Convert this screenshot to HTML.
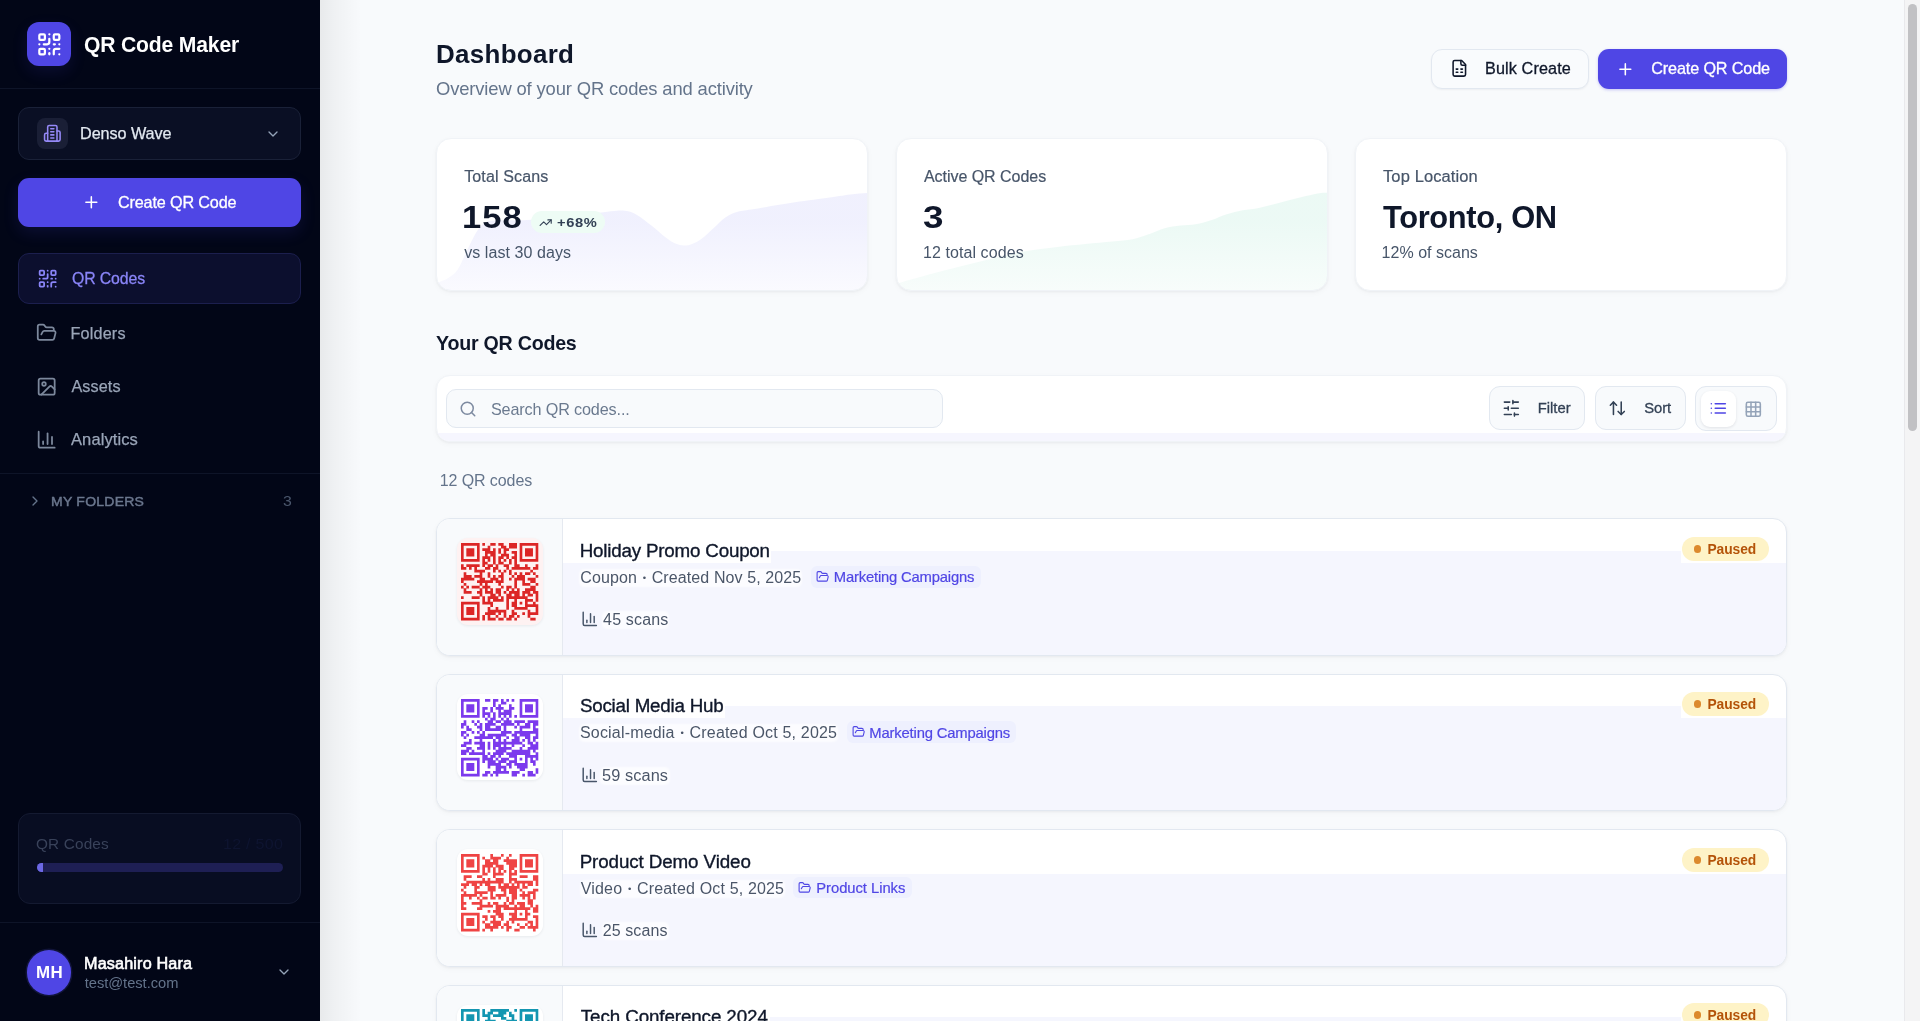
<!DOCTYPE html>
<html lang="en">
<head>
<meta charset="utf-8">
<title>QR Code Maker - Dashboard</title>
<style>
*{box-sizing:border-box;margin:0;padding:0}
html,body{width:1920px;height:1021px;overflow:hidden;background:#f8fafc;font-family:"Liberation Sans",sans-serif;color:#0f172a}
.abs{position:absolute}
.t{position:absolute;white-space:nowrap;line-height:1}
svg{position:absolute;overflow:visible}
svg.ic{fill:none;stroke:currentColor;stroke-linecap:round;stroke-linejoin:round}
#sb{position:absolute;left:0;top:0;width:320px;height:1021px;background:#020617;overflow:hidden}
#sbshadow{position:absolute;left:320px;top:0;width:42px;height:1021px;background:linear-gradient(90deg,rgba(0,0,0,.066) 0,rgba(0,0,0,.041) 31%,rgba(0,0,0,.028) 50%,rgba(0,0,0,.015) 70%,rgba(0,0,0,0) 100%)}
.sep{position:absolute;left:0;width:320px;height:1px;background:#0e1428}
#main{position:absolute;left:0;top:0;width:1920px;height:1021px;overflow:hidden}
.lay{position:absolute;left:0;top:0;width:100%;height:100%;will-change:transform}
.card{position:absolute;background:#fff;border:1px solid #f0f3f7;border-radius:15px;box-shadow:0 1px 3px rgba(15,23,42,.05),0 2px 6px rgba(15,23,42,.03);overflow:hidden}
</style>
</head>
<body>

<div id="sbshadow"></div>
<div id="main">
<div class="lay">
<div class="t" style="left:435.66px;top:42px;font-size:25px;font-weight:700;color:#0f172a;letter-spacing:0.305px;transform:scaleX(1.0370);transform-origin:0 0;">Dashboard</div>
<div class="t" style="left:435.74px;top:79px;font-size:19px;font-weight:400;color:#64748b;letter-spacing:-0.154px;transform:scaleX(0.9690);transform-origin:0 0;">Overview of your QR codes and activity</div>
<div class="abs" style="left:1431px;top:48.7px;width:158.00px;height:40.00px;background:#f9fbfd;border:1px solid #e2e8f0;border-radius:11px;box-shadow:0 1px 2px rgba(15,23,42,.05)"></div>
<svg class="ic" viewBox="0 0 24 24" width="18.67" height="18.67" style="left:1449.66px;top:59.46px;color:#0f172a;stroke-width:2;"><path d="M15 2H6a2 2 0 0 0-2 2v16a2 2 0 0 0 2 2h12a2 2 0 0 0 2-2V7Z"/><path d="M14 2v4a2 2 0 0 0 2 2h4"/><path d="M8 13h2"/><path d="M14 13h2"/><path d="M8 17h2"/><path d="M14 17h2"/></svg>
<div class="t" style="left:1485.05px;top:60px;font-size:16.2px;font-weight:400;color:#0f172a;letter-spacing:0.112px;-webkit-text-stroke:0.3px #0f172a;">Bulk Create</div>
<div class="abs" style="left:1598px;top:48.7px;width:189.30px;height:40.10px;background:#4f46e5;border-radius:11px;box-shadow:0 1px 3px rgba(79,70,229,.3)"></div>
<svg class="ic" viewBox="0 0 24 24" width="18.67" height="18.67" style="left:1615.76px;top:59.66px;color:#fff;stroke-width:2;"><path d="M5 12h14"/><path d="M12 5v14"/></svg>
<div class="t" style="left:1651.31px;top:60px;font-size:16.2px;font-weight:400;color:#fff;letter-spacing:-0.142px;-webkit-text-stroke:0.3px #fff;">Create QR Code</div>
<div class="card" style="left:436px;top:138px;width:432.29999999999995px;height:153.3px"><svg width="432.29999999999995" height="153.3" viewBox="0 0 432.29999999999995 153.3" style="left:0;top:0"><linearGradient id="g1" x1="0" y1="0" x2="0" y2="1"><stop offset="0.3" stop-color="#6366f1" stop-opacity="0.095"/><stop offset="1" stop-color="#6366f1" stop-opacity="0.03"/></linearGradient><path d="M0,144 C0.2,143.9 -0.6,144.2 1.2,143.4 C3.0,142.6 7.6,141.4 10.8,139.3 C14.0,137.2 17.2,135.6 20.4,131 C23.6,126.4 26.9,117.8 29.9,111.8 C32.9,105.8 35.7,99.4 38.3,95 C40.9,90.6 42.9,87.6 45.5,85.4 C48.1,83.2 49.8,82.5 53.9,81.8 C58.0,81.1 64.0,81.3 70,81.2 C76.0,81.1 78.5,81.8 89.8,81.1 C101.1,80.4 123.7,78.5 137.7,77 C151.7,75.5 165.3,73.2 173.7,72.3 C182.1,71.4 183.6,71.2 188,71.8 C192.4,72.4 195.6,73.4 200,75.9 C204.4,78.4 209.6,82.8 214.4,86.6 C219.2,90.4 224.8,95.6 228.8,98.6 C232.8,101.6 235.4,103.3 238.4,104.6 C241.4,105.9 244.0,106.4 246.8,106.5 C249.6,106.6 252.1,106.1 255.1,105 C258.1,103.9 261.1,102.5 264.7,99.8 C268.3,97.1 272.7,92.6 276.7,89 C280.7,85.4 284.7,80.9 288.7,78.2 C292.7,75.5 295.9,74.1 300.7,72.7 C305.5,71.3 308.6,71.4 317.4,69.9 C326.2,68.4 341.4,65.7 353.4,63.9 C365.4,62.1 379.3,60.4 389.3,59 C399.3,57.6 406.1,56.4 413.3,55.5 C420.5,54.6 429.1,54.1 432.3,53.8 L432.29999999999995,153.3 L0,153.3 Z" fill="url(#g1)"/></svg></div>
<div class="card" style="left:895.5px;top:138px;width:432.0px;height:153.3px"><svg width="432.0" height="153.3" viewBox="0 0 432.0 153.3" style="left:0;top:0"><linearGradient id="g2" x1="0" y1="0" x2="0" y2="1"><stop offset="0.3" stop-color="#10b981" stop-opacity="0.08"/><stop offset="1" stop-color="#10b981" stop-opacity="0.03"/></linearGradient><path d="M0.0,146.5 C0.3,146.1 -2.2,145.5 2.0,144 C6.2,142.5 17.6,139.6 25.1,137.5 C32.6,135.4 37.1,134.2 47.1,131.6 C57.1,129.0 72.2,125.1 85.2,122 C98.2,118.9 112.8,115.1 125.3,112.8 C137.8,110.5 149.9,109.3 160.4,108 C170.9,106.7 179.2,105.9 188.4,105 C197.6,104.1 207.7,103.3 215.5,102.5 C223.3,101.7 229.3,101.5 235.5,100.2 C241.7,99.0 247.2,96.8 252.6,95 C257.9,93.2 262.4,90.7 267.6,89.3 C272.8,87.9 278.5,87.3 283.7,86.6 C288.9,85.9 293.5,86.1 298.7,85.2 C303.9,84.3 309.5,82.7 314.7,81 C319.9,79.3 324.6,76.8 329.8,75.2 C335.0,73.6 340.5,72.3 345.8,71.3 C351.1,70.2 356.5,70.0 361.8,68.9 C367.1,67.9 372.7,66.3 377.9,65 C383.1,63.7 387.7,62.3 392.9,61 C398.1,59.7 403.7,58.2 408.9,57 C414.1,55.8 420.1,54.4 424.0,53.9 C427.9,53.4 430.7,53.9 432.0,53.9 L432.0,153.3 L0,153.3 Z" fill="url(#g2)"/></svg></div>
<div class="card" style="left:1354.6px;top:138px;width:432.0px;height:153.3px"></div>
<div class="t" style="left:464.17px;top:169px;font-size:16px;font-weight:400;color:#475569;letter-spacing:0.147px;-webkit-text-stroke:0.2px #475569;">Total Scans</div>
<div class="t" style="left:461.89px;top:201px;font-size:32px;font-weight:700;color:#0f172a;letter-spacing:0.982px;transform:scaleX(1.0783);transform-origin:0 0;">158</div>
<div class="abs" style="left:530.5px;top:211.2px;width:74.80px;height:22.10px;background:#eefcf5;border-radius:11px"></div>
<svg class="ic" viewBox="0 0 24 24" width="13.33" height="13.33" style="left:539.04px;top:215.53px;color:#334155;stroke-width:2;"><polyline points="22 7 13.5 15.5 8.5 10.5 2 17"/><polyline points="16 7 22 7 22 13"/></svg>
<div class="t" style="left:556.85px;top:216px;font-size:13.4px;font-weight:700;color:#334155;letter-spacing:0.536px;transform:scaleX(1.0971);transform-origin:0 0;">+68%</div>
<div class="t" style="left:464.18px;top:245px;font-size:16px;font-weight:400;color:#475569;letter-spacing:0.075px;">vs last 30 days</div>
<div class="t" style="left:923.96px;top:169px;font-size:16px;font-weight:400;color:#475569;letter-spacing:-0.038px;-webkit-text-stroke:0.2px #475569;">Active QR Codes</div>
<div class="t" style="left:923.25px;top:201px;font-size:32px;font-weight:700;color:#0f172a;letter-spacing:0.000px;transform:scaleX(1.1500);transform-origin:0 0;">3</div>
<div class="t" style="left:922.91px;top:245px;font-size:16px;font-weight:400;color:#475569;letter-spacing:0.086px;">12 total codes</div>
<div class="t" style="left:1382.56px;top:169px;font-size:16px;font-weight:400;color:#475569;letter-spacing:0.124px;transform:scaleX(1.0291);transform-origin:0 0;-webkit-text-stroke:0.2px #475569;">Top Location</div>
<div class="t" style="left:1382.51px;top:201px;font-size:32px;font-weight:700;color:#0f172a;letter-spacing:-0.367px;transform:scaleX(0.9639);transform-origin:0 0;">Toronto, ON</div>
<div class="t" style="left:1381.61px;top:245px;font-size:16px;font-weight:400;color:#475569;letter-spacing:0.019px;">12% of scans</div>
<div class="t" style="left:436.37px;top:333px;font-size:20.4px;font-weight:700;color:#0f172a;letter-spacing:-0.253px;transform:scaleX(0.9632);transform-origin:0 0;">Your QR Codes</div>
<div class="card" style="left:436px;top:375.2px;width:1350.6px;height:66.6px;border-radius:14px"><div class="abs" style="left:0;right:0;top:56.6px;bottom:0;background:#f6f6fe"></div></div>
<div class="abs" style="left:446.2px;top:389.3px;width:497.30px;height:38.90px;background:#f8fafc;border:1px solid #e2e8f0;border-radius:10px"></div>
<svg class="ic" viewBox="0 0 24 24" width="18" height="18" style="left:459.40px;top:399.90px;color:#7d8aa0;stroke-width:2;"><circle cx="11" cy="11" r="8"/><path d="m21 21-4.3-4.3"/></svg>
<div class="t" style="left:490.88px;top:401px;font-size:16.2px;font-weight:400;color:#6b7a8f;letter-spacing:-0.140px;">Search QR codes...</div>
<div class="abs" style="left:1488.6px;top:385.8px;width:96.90px;height:44.20px;background:#f8fafc;border:1px solid #e2e8f0;border-radius:11px"></div>
<svg class="ic" viewBox="0 0 24 24" width="18.67" height="18.67" style="left:1502.26px;top:398.67px;color:#334155;stroke-width:2;"><line x1="21" x2="14" y1="4" y2="4"/><line x1="10" x2="3" y1="4" y2="4"/><line x1="21" x2="12" y1="12" y2="12"/><line x1="8" x2="3" y1="12" y2="12"/><line x1="21" x2="16" y1="20" y2="20"/><line x1="12" x2="3" y1="20" y2="20"/><line x1="14" x2="14" y1="2" y2="6"/><line x1="8" x2="8" y1="10" y2="14"/><line x1="16" x2="16" y1="18" y2="22"/></svg>
<div class="t" style="left:1537.72px;top:401px;font-size:14.8px;font-weight:400;color:#334155;letter-spacing:0.011px;-webkit-text-stroke:0.3px #334155;">Filter</div>
<div class="abs" style="left:1594.7px;top:385.8px;width:91.30px;height:44.20px;background:#f8fafc;border:1px solid #e2e8f0;border-radius:11px"></div>
<svg class="ic" viewBox="0 0 24 24" width="18.67" height="18.67" style="left:1608.37px;top:398.67px;color:#334155;stroke-width:2;"><path d="m21 16-4 4-4-4"/><path d="M17 20V4"/><path d="m3 8 4-4 4 4"/><path d="M7 4v16"/></svg>
<div class="t" style="left:1644.28px;top:401px;font-size:14.8px;font-weight:400;color:#334155;letter-spacing:-0.092px;-webkit-text-stroke:0.3px #334155;">Sort</div>
<div class="abs" style="left:1695.3px;top:385.8px;width:81.40px;height:45.70px;background:#f8fafc;border:1px solid #e2e8f0;border-radius:11px"></div>
<div class="abs" style="left:1700.8px;top:390.6px;width:35.00px;height:36.10px;background:#fff;border-radius:9px;box-shadow:0 1px 3px rgba(15,23,42,.1)"></div>
<svg class="ic" viewBox="0 0 24 24" width="18.67" height="18.67" style="left:1708.96px;top:399.27px;color:#4f46e5;stroke-width:2;"><line x1="8" x2="21" y1="6" y2="6"/><line x1="8" x2="21" y1="12" y2="12"/><line x1="8" x2="21" y1="18" y2="18"/><line x1="3" x2="3.01" y1="6" y2="6"/><line x1="3" x2="3.01" y1="12" y2="12"/><line x1="3" x2="3.01" y1="18" y2="18"/></svg>
<svg class="ic" viewBox="0 0 24 24" width="18.67" height="18.67" style="left:1744.46px;top:399.56px;color:#94a3b8;stroke-width:2;"><rect width="18" height="18" x="3" y="3" rx="2"/><path d="M3 9h18"/><path d="M3 15h18"/><path d="M9 3v18"/><path d="M15 3v18"/></svg>
<div class="t" style="left:439.71px;top:473px;font-size:16px;font-weight:400;color:#64748b;letter-spacing:-0.086px;">12 QR codes</div>
<div class="card row" style="left:436px;top:518.20px;width:1350.6px;height:137.5px;border-radius:14px;border-color:#e2e8f0"><div class="abs" style="left:126px;top:43.5px;right:0;bottom:0;background:#f5f6fe"></div><div class="abs" style="left:334.2px;top:31.7px;right:104.5px;height:13px;background:#f5f6fe"></div><div class="abs" style="left:0;top:0;width:126.1px;bottom:0;background:#f8fafc;border-right:1px solid #e5e9f0"></div><div class="abs" style="left:19.7px;top:19.1px;width:86.5px;height:86.5px;border-radius:11px;background:#fef2f2;box-shadow:0 1px 3px rgba(15,23,42,.07)"><svg viewBox="0 0 29 29" width="77.3" height="77.3" style="left:4.5px;top:4.8px"><path d="M0,0h7v1.04h-7zM8,0h1v1.04h-1zM11,0h2v1.04h-2zM14,0h2v1.04h-2zM18,0h3v1.04h-3zM22,0h7v1.04h-7zM0,1h1v1.04h-1zM6,1h1v1.04h-1zM10,1h1v1.04h-1zM15,1h2v1.04h-2zM18,1h3v1.04h-3zM22,1h1v1.04h-1zM28,1h1v1.04h-1zM0,2h1v1.04h-1zM2,2h3v1.04h-3zM6,2h1v1.04h-1zM8,2h3v1.04h-3zM12,2h1v1.04h-1zM14,2h1v1.04h-1zM16,2h2v1.04h-2zM22,2h1v1.04h-1zM24,2h3v1.04h-3zM28,2h1v1.04h-1zM0,3h1v1.04h-1zM2,3h3v1.04h-3zM6,3h1v1.04h-1zM9,3h4v1.04h-4zM14,3h1v1.04h-1zM16,3h1v1.04h-1zM19,3h2v1.04h-2zM22,3h1v1.04h-1zM24,3h3v1.04h-3zM28,3h1v1.04h-1zM0,4h1v1.04h-1zM2,4h3v1.04h-3zM6,4h1v1.04h-1zM9,4h1v1.04h-1zM11,4h2v1.04h-2zM15,4h3v1.04h-3zM20,4h1v1.04h-1zM22,4h1v1.04h-1zM24,4h3v1.04h-3zM28,4h1v1.04h-1zM0,5h1v1.04h-1zM6,5h1v1.04h-1zM8,5h3v1.04h-3zM12,5h1v1.04h-1zM14,5h2v1.04h-2zM17,5h1v1.04h-1zM19,5h2v1.04h-2zM22,5h1v1.04h-1zM28,5h1v1.04h-1zM0,6h7v1.04h-7zM8,6h1v1.04h-1zM10,6h1v1.04h-1zM12,6h1v1.04h-1zM14,6h1v1.04h-1zM16,6h1v1.04h-1zM18,6h1v1.04h-1zM20,6h1v1.04h-1zM22,6h7v1.04h-7zM8,7h2v1.04h-2zM12,7h1v1.04h-1zM14,7h2v1.04h-2zM18,7h1v1.04h-1zM20,7h1v1.04h-1zM0,8h1v1.04h-1zM2,8h5v1.04h-5zM8,8h1v1.04h-1zM10,8h2v1.04h-2zM13,8h1v1.04h-1zM16,8h2v1.04h-2zM20,8h2v1.04h-2zM24,8h1v1.04h-1zM28,8h1v1.04h-1zM0,9h2v1.04h-2zM3,9h1v1.04h-1zM5,9h1v1.04h-1zM9,9h2v1.04h-2zM12,9h2v1.04h-2zM17,9h1v1.04h-1zM19,9h7v1.04h-7zM27,9h2v1.04h-2zM5,10h4v1.04h-4zM12,10h1v1.04h-1zM14,10h1v1.04h-1zM16,10h1v1.04h-1zM18,10h1v1.04h-1zM26,10h1v1.04h-1zM1,11h1v1.04h-1zM7,11h1v1.04h-1zM10,11h1v1.04h-1zM15,11h1v1.04h-1zM18,11h1v1.04h-1zM20,11h1v1.04h-1zM22,11h1v1.04h-1zM24,11h2v1.04h-2zM27,11h1v1.04h-1zM1,12h3v1.04h-3zM5,12h3v1.04h-3zM10,12h1v1.04h-1zM12,12h1v1.04h-1zM14,12h2v1.04h-2zM19,12h1v1.04h-1zM21,12h3v1.04h-3zM28,12h1v1.04h-1zM0,13h5v1.04h-5zM7,13h2v1.04h-2zM11,13h3v1.04h-3zM15,13h1v1.04h-1zM18,13h1v1.04h-1zM20,13h4v1.04h-4zM25,13h3v1.04h-3zM0,14h1v1.04h-1zM6,14h6v1.04h-6zM13,14h3v1.04h-3zM20,14h1v1.04h-1zM23,14h1v1.04h-1zM26,14h2v1.04h-2zM1,15h1v1.04h-1zM7,15h1v1.04h-1zM9,15h1v1.04h-1zM14,15h1v1.04h-1zM20,15h1v1.04h-1zM23,15h3v1.04h-3zM28,15h1v1.04h-1zM0,16h1v1.04h-1zM2,16h1v1.04h-1zM4,16h3v1.04h-3zM8,16h3v1.04h-3zM15,16h1v1.04h-1zM17,16h2v1.04h-2zM20,16h1v1.04h-1zM26,16h2v1.04h-2zM1,17h1v1.04h-1zM7,17h1v1.04h-1zM9,17h1v1.04h-1zM11,17h1v1.04h-1zM13,17h2v1.04h-2zM17,17h1v1.04h-1zM19,17h1v1.04h-1zM21,17h1v1.04h-1zM24,17h4v1.04h-4zM1,18h3v1.04h-3zM6,18h2v1.04h-2zM9,18h3v1.04h-3zM13,18h2v1.04h-2zM16,18h1v1.04h-1zM18,18h4v1.04h-4zM23,18h3v1.04h-3zM27,18h2v1.04h-2zM7,19h1v1.04h-1zM11,19h2v1.04h-2zM14,19h1v1.04h-1zM17,19h2v1.04h-2zM20,19h2v1.04h-2zM23,19h1v1.04h-1zM25,19h2v1.04h-2zM28,19h1v1.04h-1zM0,20h1v1.04h-1zM4,20h3v1.04h-3zM8,20h1v1.04h-1zM10,20h4v1.04h-4zM15,20h1v1.04h-1zM17,20h8v1.04h-8zM28,20h1v1.04h-1zM8,21h1v1.04h-1zM10,21h1v1.04h-1zM12,21h4v1.04h-4zM17,21h1v1.04h-1zM20,21h1v1.04h-1zM24,21h3v1.04h-3zM28,21h1v1.04h-1zM0,22h7v1.04h-7zM8,22h4v1.04h-4zM17,22h1v1.04h-1zM19,22h2v1.04h-2zM22,22h1v1.04h-1zM24,22h1v1.04h-1zM27,22h1v1.04h-1zM0,23h1v1.04h-1zM6,23h1v1.04h-1zM11,23h1v1.04h-1zM17,23h1v1.04h-1zM19,23h2v1.04h-2zM24,23h5v1.04h-5zM0,24h1v1.04h-1zM2,24h3v1.04h-3zM6,24h1v1.04h-1zM10,24h1v1.04h-1zM13,24h1v1.04h-1zM17,24h1v1.04h-1zM20,24h5v1.04h-5zM28,24h1v1.04h-1zM0,25h1v1.04h-1zM2,25h3v1.04h-3zM6,25h1v1.04h-1zM10,25h7v1.04h-7zM19,25h1v1.04h-1zM25,25h1v1.04h-1zM28,25h1v1.04h-1zM0,26h1v1.04h-1zM2,26h3v1.04h-3zM6,26h1v1.04h-1zM9,26h4v1.04h-4zM14,26h1v1.04h-1zM16,26h1v1.04h-1zM19,26h2v1.04h-2zM23,26h1v1.04h-1zM25,26h4v1.04h-4zM0,27h1v1.04h-1zM6,27h1v1.04h-1zM8,27h1v1.04h-1zM10,27h1v1.04h-1zM13,27h1v1.04h-1zM16,27h1v1.04h-1zM18,27h2v1.04h-2zM21,27h1v1.04h-1zM25,27h1v1.04h-1zM0,28h7v1.04h-7zM8,28h1v1.04h-1zM10,28h3v1.04h-3zM14,28h2v1.04h-2zM17,28h2v1.04h-2zM20,28h1v1.04h-1zM26,28h2v1.04h-2z" fill="#dc2626"/></svg></div></div>
<div class="t" style="left:579.71px;top:542px;font-size:18.8px;font-weight:400;color:#0f172a;letter-spacing:-0.201px;-webkit-text-stroke:0.35px #0f172a;">Holiday Promo Coupon</div>
<div class="t" style="left:580.31px;top:570px;font-size:16px;font-weight:400;color:#4b5669;letter-spacing:0.102px;background:rgba(255,255,255,.7);border-radius:4px;box-shadow:0 0 2px 1px rgba(255,255,255,.7);text-shadow:0 0 2px #fff,0 0 3px #fff;">Coupon <span style="font-size:.6em;position:relative;top:-.22em;letter-spacing:0;padding:0 .12em">•</span> Created Nov 5, 2025</div>
<div class="abs" style="left:810.9px;top:565.8px;width:170.30px;height:21.80px;background:#eef0fe;border-radius:6px"></div>
<svg class="ic" viewBox="0 0 24 24" width="13.33" height="13.33" style="left:816.24px;top:570.04px;color:#4f46e5;stroke-width:2;"><path d="m6 14 1.5-2.9A2 2 0 0 1 9.24 10H20a2 2 0 0 1 1.94 2.5l-1.54 6a2 2 0 0 1-1.95 1.5H4a2 2 0 0 1-2-2V5a2 2 0 0 1 2-2h3.9a2 2 0 0 1 1.69.9l.81 1.2a2 2 0 0 0 1.67.9H18a2 2 0 0 1 2 2v2"/></svg>
<div class="t" style="left:833.76px;top:570px;font-size:14.8px;font-weight:400;color:#5046e5;letter-spacing:-0.181px;-webkit-text-stroke:0.2px #5046e5;">Marketing Campaigns</div>
<svg class="ic" viewBox="0 0 24 24" width="17.6" height="17.6" style="left:581.00px;top:610.20px;color:#475569;stroke-width:2;"><path d="M3 3v16a2 2 0 0 0 2 2h16"/><path d="M18 17V9"/><path d="M13 17V5"/><path d="M8 17v-3"/></svg>
<div class="t" style="left:603.08px;top:612px;font-size:16px;font-weight:400;color:#4b5669;letter-spacing:0.162px;background:rgba(255,255,255,.7);border-radius:4px;box-shadow:0 0 2px 1px rgba(255,255,255,.7);text-shadow:0 0 2px #fff,0 0 3px #fff;">45 scans</div>
<div class="abs" style="left:1682.2px;top:536.75px;width:86.40px;height:24.05px;background:#fef3c7;border-radius:12px"></div>
<div class="abs" style="left:1693.6px;top:544.9px;width:7.80px;height:7.80px;background:#dc8a2e;border-radius:50%"></div>
<div class="t" style="left:1707.41px;top:543px;font-size:13.8px;font-weight:700;color:#b45309;letter-spacing:-0.053px;">Paused</div>
<div class="card row" style="left:436px;top:673.65px;width:1350.6px;height:137.5px;border-radius:14px;border-color:#e2e8f0"><div class="abs" style="left:126px;top:43.5px;right:0;bottom:0;background:#f5f6fe"></div><div class="abs" style="left:288.1px;top:31.7px;right:104.5px;height:13px;background:#f5f6fe"></div><div class="abs" style="left:0;top:0;width:126.1px;bottom:0;background:#f8fafc;border-right:1px solid #e5e9f0"></div><div class="abs" style="left:19.7px;top:19.1px;width:86.5px;height:86.5px;border-radius:11px;background:#fff;box-shadow:0 1px 3px rgba(15,23,42,.07)"><svg viewBox="0 0 29 29" width="77.3" height="77.3" style="left:4.5px;top:4.8px"><path d="M0,0h7v1.04h-7zM9,0h2v1.04h-2zM12,0h2v1.04h-2zM15,0h1v1.04h-1zM17,0h1v1.04h-1zM19,0h1v1.04h-1zM22,0h7v1.04h-7zM0,1h1v1.04h-1zM6,1h1v1.04h-1zM12,1h1v1.04h-1zM15,1h2v1.04h-2zM22,1h1v1.04h-1zM28,1h1v1.04h-1zM0,2h1v1.04h-1zM2,2h3v1.04h-3zM6,2h1v1.04h-1zM12,2h1v1.04h-1zM14,2h1v1.04h-1zM18,2h1v1.04h-1zM22,2h1v1.04h-1zM24,2h3v1.04h-3zM28,2h1v1.04h-1zM0,3h1v1.04h-1zM2,3h3v1.04h-3zM6,3h1v1.04h-1zM8,3h2v1.04h-2zM11,3h1v1.04h-1zM13,3h3v1.04h-3zM18,3h2v1.04h-2zM22,3h1v1.04h-1zM24,3h3v1.04h-3zM28,3h1v1.04h-1zM0,4h1v1.04h-1zM2,4h3v1.04h-3zM6,4h1v1.04h-1zM8,4h1v1.04h-1zM11,4h1v1.04h-1zM14,4h1v1.04h-1zM16,4h3v1.04h-3zM22,4h1v1.04h-1zM24,4h3v1.04h-3zM28,4h1v1.04h-1zM0,5h1v1.04h-1zM6,5h1v1.04h-1zM8,5h3v1.04h-3zM12,5h1v1.04h-1zM14,5h5v1.04h-5zM22,5h1v1.04h-1zM28,5h1v1.04h-1zM0,6h7v1.04h-7zM8,6h1v1.04h-1zM10,6h1v1.04h-1zM12,6h1v1.04h-1zM14,6h1v1.04h-1zM16,6h1v1.04h-1zM18,6h1v1.04h-1zM20,6h1v1.04h-1zM22,6h7v1.04h-7zM9,7h1v1.04h-1zM11,7h2v1.04h-2zM15,7h1v1.04h-1zM17,7h1v1.04h-1zM1,8h1v1.04h-1zM4,8h1v1.04h-1zM6,8h1v1.04h-1zM10,8h2v1.04h-2zM13,8h2v1.04h-2zM16,8h3v1.04h-3zM20,8h4v1.04h-4zM25,8h4v1.04h-4zM0,9h2v1.04h-2zM5,9h1v1.04h-1zM7,9h1v1.04h-1zM9,9h4v1.04h-4zM15,9h5v1.04h-5zM21,9h1v1.04h-1zM24,9h2v1.04h-2zM27,9h2v1.04h-2zM0,10h1v1.04h-1zM2,10h1v1.04h-1zM6,10h2v1.04h-2zM9,10h2v1.04h-2zM13,10h2v1.04h-2zM16,10h1v1.04h-1zM20,10h1v1.04h-1zM22,10h4v1.04h-4zM27,10h1v1.04h-1zM2,11h2v1.04h-2zM7,11h1v1.04h-1zM9,11h6v1.04h-6zM16,11h1v1.04h-1zM22,11h1v1.04h-1zM27,11h2v1.04h-2zM0,12h2v1.04h-2zM4,12h1v1.04h-1zM6,12h1v1.04h-1zM8,12h1v1.04h-1zM15,12h4v1.04h-4zM20,12h9v1.04h-9zM0,13h1v1.04h-1zM2,13h1v1.04h-1zM7,13h2v1.04h-2zM10,13h7v1.04h-7zM19,13h2v1.04h-2zM22,13h4v1.04h-4zM28,13h1v1.04h-1zM1,14h1v1.04h-1zM5,14h7v1.04h-7zM13,14h2v1.04h-2zM17,14h1v1.04h-1zM20,14h2v1.04h-2zM24,14h2v1.04h-2zM27,14h2v1.04h-2zM3,15h1v1.04h-1zM7,15h1v1.04h-1zM12,15h1v1.04h-1zM14,15h1v1.04h-1zM16,15h1v1.04h-1zM19,15h3v1.04h-3zM23,15h1v1.04h-1zM25,15h1v1.04h-1zM27,15h1v1.04h-1zM1,16h3v1.04h-3zM5,16h4v1.04h-4zM10,16h1v1.04h-1zM12,16h11v1.04h-11zM25,16h2v1.04h-2zM28,16h1v1.04h-1zM0,17h2v1.04h-2zM7,17h2v1.04h-2zM10,17h1v1.04h-1zM12,17h3v1.04h-3zM16,17h1v1.04h-1zM19,17h1v1.04h-1zM23,17h1v1.04h-1zM26,17h3v1.04h-3zM2,18h2v1.04h-2zM6,18h3v1.04h-3zM10,18h1v1.04h-1zM12,18h1v1.04h-1zM14,18h5v1.04h-5zM22,18h1v1.04h-1zM25,18h4v1.04h-4zM0,19h3v1.04h-3zM4,19h1v1.04h-1zM8,19h1v1.04h-1zM13,19h4v1.04h-4zM19,19h7v1.04h-7zM27,19h1v1.04h-1zM0,20h2v1.04h-2zM3,20h6v1.04h-6zM10,20h1v1.04h-1zM12,20h4v1.04h-4zM17,20h9v1.04h-9zM28,20h1v1.04h-1zM8,21h2v1.04h-2zM11,21h2v1.04h-2zM14,21h1v1.04h-1zM18,21h3v1.04h-3zM24,21h5v1.04h-5zM0,22h7v1.04h-7zM8,22h4v1.04h-4zM13,22h1v1.04h-1zM15,22h3v1.04h-3zM20,22h1v1.04h-1zM22,22h1v1.04h-1zM24,22h1v1.04h-1zM26,22h1v1.04h-1zM28,22h1v1.04h-1zM0,23h1v1.04h-1zM6,23h1v1.04h-1zM8,23h1v1.04h-1zM10,23h3v1.04h-3zM14,23h3v1.04h-3zM18,23h3v1.04h-3zM24,23h1v1.04h-1zM26,23h2v1.04h-2zM0,24h1v1.04h-1zM2,24h3v1.04h-3zM6,24h1v1.04h-1zM10,24h5v1.04h-5zM17,24h2v1.04h-2zM20,24h5v1.04h-5zM27,24h1v1.04h-1zM0,25h1v1.04h-1zM2,25h3v1.04h-3zM6,25h1v1.04h-1zM10,25h1v1.04h-1zM13,25h4v1.04h-4zM18,25h1v1.04h-1zM21,25h4v1.04h-4zM0,26h1v1.04h-1zM2,26h3v1.04h-3zM6,26h1v1.04h-1zM13,26h2v1.04h-2zM16,26h1v1.04h-1zM22,26h2v1.04h-2zM28,26h1v1.04h-1zM0,27h1v1.04h-1zM6,27h1v1.04h-1zM9,27h2v1.04h-2zM12,27h6v1.04h-6zM19,27h3v1.04h-3zM25,27h2v1.04h-2zM28,27h1v1.04h-1zM0,28h7v1.04h-7zM8,28h2v1.04h-2zM11,28h1v1.04h-1zM13,28h1v1.04h-1zM19,28h2v1.04h-2zM23,28h1v1.04h-1zM25,28h3v1.04h-3z" fill="#7c3aed"/></svg></div></div>
<div class="t" style="left:579.94px;top:697px;font-size:18.8px;font-weight:400;color:#0f172a;letter-spacing:-0.231px;-webkit-text-stroke:0.35px #0f172a;">Social Media Hub</div>
<div class="t" style="left:579.98px;top:725px;font-size:16px;font-weight:400;color:#4b5669;letter-spacing:0.184px;background:rgba(255,255,255,.7);border-radius:4px;box-shadow:0 0 2px 1px rgba(255,255,255,.7);text-shadow:0 0 2px #fff,0 0 3px #fff;">Social-media <span style="font-size:.6em;position:relative;top:-.22em;letter-spacing:0;padding:0 .12em">•</span> Created Oct 5, 2025</div>
<div class="abs" style="left:846.6px;top:721.25px;width:169.65px;height:21.80px;background:#eef0fe;border-radius:6px"></div>
<svg class="ic" viewBox="0 0 24 24" width="13.33" height="13.33" style="left:851.94px;top:725.49px;color:#4f46e5;stroke-width:2;"><path d="m6 14 1.5-2.9A2 2 0 0 1 9.24 10H20a2 2 0 0 1 1.94 2.5l-1.54 6a2 2 0 0 1-1.95 1.5H4a2 2 0 0 1-2-2V5a2 2 0 0 1 2-2h3.9a2 2 0 0 1 1.69.9l.81 1.2a2 2 0 0 0 1.67.9H18a2 2 0 0 1 2 2v2"/></svg>
<div class="t" style="left:869.36px;top:726px;font-size:14.8px;font-weight:400;color:#5046e5;letter-spacing:-0.175px;-webkit-text-stroke:0.2px #5046e5;">Marketing Campaigns</div>
<svg class="ic" viewBox="0 0 24 24" width="17.6" height="17.6" style="left:581.00px;top:765.65px;color:#475569;stroke-width:2;"><path d="M3 3v16a2 2 0 0 0 2 2h16"/><path d="M18 17V9"/><path d="M13 17V5"/><path d="M8 17v-3"/></svg>
<div class="t" style="left:602.35px;top:768px;font-size:16px;font-weight:400;color:#4b5669;letter-spacing:0.095px;transform:scaleX(1.0203);transform-origin:0 0;background:rgba(255,255,255,.7);border-radius:4px;box-shadow:0 0 2px 1px rgba(255,255,255,.7);text-shadow:0 0 2px #fff,0 0 3px #fff;">59 scans</div>
<div class="abs" style="left:1682.2px;top:692.2px;width:86.40px;height:24.05px;background:#fef3c7;border-radius:12px"></div>
<div class="abs" style="left:1693.6px;top:700.3499999999999px;width:7.80px;height:7.80px;background:#dc8a2e;border-radius:50%"></div>
<div class="t" style="left:1707.41px;top:698px;font-size:13.8px;font-weight:700;color:#b45309;letter-spacing:-0.053px;">Paused</div>
<div class="card row" style="left:436px;top:829.10px;width:1350.6px;height:137.5px;border-radius:14px;border-color:#e2e8f0"><div class="abs" style="left:126px;top:43.5px;right:0;bottom:0;background:#f5f6fe"></div><div class="abs" style="left:0;top:0;width:126.1px;bottom:0;background:#f8fafc;border-right:1px solid #e5e9f0"></div><div class="abs" style="left:19.7px;top:19.1px;width:86.5px;height:86.5px;border-radius:11px;background:#fff;box-shadow:0 1px 3px rgba(15,23,42,.07)"><svg viewBox="0 0 29 29" width="77.3" height="77.3" style="left:4.5px;top:4.8px"><path d="M0,0h7v1.04h-7zM11,0h1v1.04h-1zM15,0h1v1.04h-1zM18,0h1v1.04h-1zM22,0h7v1.04h-7zM0,1h1v1.04h-1zM6,1h1v1.04h-1zM8,1h1v1.04h-1zM11,1h4v1.04h-4zM17,1h1v1.04h-1zM22,1h1v1.04h-1zM28,1h1v1.04h-1zM0,2h1v1.04h-1zM2,2h3v1.04h-3zM6,2h1v1.04h-1zM9,2h2v1.04h-2zM12,2h2v1.04h-2zM16,2h5v1.04h-5zM22,2h1v1.04h-1zM24,2h3v1.04h-3zM28,2h1v1.04h-1zM0,3h1v1.04h-1zM2,3h3v1.04h-3zM6,3h1v1.04h-1zM9,3h5v1.04h-5zM17,3h4v1.04h-4zM22,3h1v1.04h-1zM24,3h3v1.04h-3zM28,3h1v1.04h-1zM0,4h1v1.04h-1zM2,4h3v1.04h-3zM6,4h1v1.04h-1zM8,4h4v1.04h-4zM13,4h3v1.04h-3zM18,4h3v1.04h-3zM22,4h1v1.04h-1zM24,4h3v1.04h-3zM28,4h1v1.04h-1zM0,5h1v1.04h-1zM6,5h1v1.04h-1zM8,5h1v1.04h-1zM10,5h1v1.04h-1zM12,5h1v1.04h-1zM14,5h2v1.04h-2zM18,5h2v1.04h-2zM22,5h1v1.04h-1zM28,5h1v1.04h-1zM0,6h7v1.04h-7zM8,6h1v1.04h-1zM10,6h1v1.04h-1zM12,6h1v1.04h-1zM14,6h1v1.04h-1zM16,6h1v1.04h-1zM18,6h1v1.04h-1zM20,6h1v1.04h-1zM22,6h7v1.04h-7zM8,7h2v1.04h-2zM12,7h4v1.04h-4zM18,7h3v1.04h-3zM1,8h3v1.04h-3zM6,8h2v1.04h-2zM12,8h1v1.04h-1zM18,8h1v1.04h-1zM22,8h3v1.04h-3zM27,8h2v1.04h-2zM1,9h1v1.04h-1zM8,9h1v1.04h-1zM10,9h1v1.04h-1zM13,9h3v1.04h-3zM18,9h3v1.04h-3zM27,9h2v1.04h-2zM2,10h14v1.04h-14zM18,10h1v1.04h-1zM20,10h7v1.04h-7zM28,10h1v1.04h-1zM0,11h3v1.04h-3zM4,11h2v1.04h-2zM7,11h1v1.04h-1zM9,11h2v1.04h-2zM14,11h1v1.04h-1zM16,11h2v1.04h-2zM19,11h1v1.04h-1zM21,11h1v1.04h-1zM23,11h1v1.04h-1zM25,11h2v1.04h-2zM28,11h1v1.04h-1zM1,12h1v1.04h-1zM5,12h2v1.04h-2zM10,12h3v1.04h-3zM14,12h8v1.04h-8zM23,12h2v1.04h-2zM0,13h1v1.04h-1zM5,13h1v1.04h-1zM10,13h3v1.04h-3zM15,13h2v1.04h-2zM18,13h3v1.04h-3zM22,13h1v1.04h-1zM27,13h2v1.04h-2zM1,14h1v1.04h-1zM5,14h5v1.04h-5zM11,14h1v1.04h-1zM16,14h1v1.04h-1zM18,14h3v1.04h-3zM23,14h1v1.04h-1zM25,14h3v1.04h-3zM0,15h6v1.04h-6zM7,15h1v1.04h-1zM11,15h1v1.04h-1zM13,15h4v1.04h-4zM19,15h2v1.04h-2zM22,15h4v1.04h-4zM27,15h1v1.04h-1zM0,16h1v1.04h-1zM3,16h1v1.04h-1zM6,16h1v1.04h-1zM8,16h2v1.04h-2zM11,16h2v1.04h-2zM14,16h1v1.04h-1zM17,16h1v1.04h-1zM19,16h2v1.04h-2zM23,16h1v1.04h-1zM25,16h1v1.04h-1zM27,16h1v1.04h-1zM0,17h1v1.04h-1zM7,17h1v1.04h-1zM17,17h1v1.04h-1zM19,17h1v1.04h-1zM25,17h2v1.04h-2zM0,18h2v1.04h-2zM4,18h4v1.04h-4zM10,18h1v1.04h-1zM12,18h2v1.04h-2zM16,18h1v1.04h-1zM18,18h2v1.04h-2zM21,18h3v1.04h-3zM25,18h2v1.04h-2zM0,19h1v1.04h-1zM7,19h5v1.04h-5zM13,19h5v1.04h-5zM20,19h1v1.04h-1zM22,19h2v1.04h-2zM26,19h1v1.04h-1zM28,19h1v1.04h-1zM0,20h2v1.04h-2zM6,20h2v1.04h-2zM13,20h2v1.04h-2zM16,20h10v1.04h-10zM27,20h2v1.04h-2zM10,21h1v1.04h-1zM12,21h3v1.04h-3zM20,21h1v1.04h-1zM24,21h1v1.04h-1zM27,21h2v1.04h-2zM0,22h7v1.04h-7zM13,22h3v1.04h-3zM18,22h3v1.04h-3zM22,22h1v1.04h-1zM24,22h2v1.04h-2zM0,23h1v1.04h-1zM6,23h1v1.04h-1zM8,23h2v1.04h-2zM11,23h2v1.04h-2zM14,23h2v1.04h-2zM19,23h2v1.04h-2zM24,23h1v1.04h-1zM27,23h2v1.04h-2zM0,24h1v1.04h-1zM2,24h3v1.04h-3zM6,24h1v1.04h-1zM9,24h1v1.04h-1zM12,24h1v1.04h-1zM15,24h1v1.04h-1zM18,24h7v1.04h-7zM28,24h1v1.04h-1zM0,25h1v1.04h-1zM2,25h3v1.04h-3zM6,25h1v1.04h-1zM8,25h1v1.04h-1zM11,25h4v1.04h-4zM17,25h1v1.04h-1zM19,25h1v1.04h-1zM25,25h2v1.04h-2zM28,25h1v1.04h-1zM0,26h1v1.04h-1zM2,26h3v1.04h-3zM6,26h1v1.04h-1zM9,26h2v1.04h-2zM12,26h3v1.04h-3zM16,26h2v1.04h-2zM21,26h1v1.04h-1zM24,26h1v1.04h-1zM26,26h1v1.04h-1zM28,26h1v1.04h-1zM0,27h1v1.04h-1zM6,27h1v1.04h-1zM9,27h5v1.04h-5zM15,27h1v1.04h-1zM17,27h2v1.04h-2zM22,27h2v1.04h-2zM25,27h4v1.04h-4zM0,28h7v1.04h-7zM8,28h1v1.04h-1zM11,28h1v1.04h-1zM17,28h1v1.04h-1zM20,28h2v1.04h-2zM27,28h1v1.04h-1z" fill="#ef4444"/></svg></div></div>
<div class="t" style="left:579.71px;top:853px;font-size:18.8px;font-weight:400;color:#0f172a;letter-spacing:-0.108px;-webkit-text-stroke:0.35px #0f172a;">Product Demo Video</div>
<div class="t" style="left:580.77px;top:881px;font-size:16px;font-weight:400;color:#4b5669;letter-spacing:0.158px;background:rgba(255,255,255,.7);border-radius:4px;box-shadow:0 0 2px 1px rgba(255,255,255,.7);text-shadow:0 0 2px #fff,0 0 3px #fff;">Video <span style="font-size:.6em;position:relative;top:-.22em;letter-spacing:0;padding:0 .12em">•</span> Created Oct 5, 2025</div>
<div class="abs" style="left:792.8px;top:876.6999999999999px;width:119.40px;height:21.80px;background:#eef0fe;border-radius:6px"></div>
<svg class="ic" viewBox="0 0 24 24" width="13.33" height="13.33" style="left:798.13px;top:880.94px;color:#4f46e5;stroke-width:2;"><path d="m6 14 1.5-2.9A2 2 0 0 1 9.24 10H20a2 2 0 0 1 1.94 2.5l-1.54 6a2 2 0 0 1-1.95 1.5H4a2 2 0 0 1-2-2V5a2 2 0 0 1 2-2h3.9a2 2 0 0 1 1.69.9l.81 1.2a2 2 0 0 0 1.67.9H18a2 2 0 0 1 2 2v2"/></svg>
<div class="t" style="left:816.26px;top:881px;font-size:14.8px;font-weight:400;color:#5046e5;letter-spacing:-0.047px;-webkit-text-stroke:0.2px #5046e5;">Product Links</div>
<svg class="ic" viewBox="0 0 24 24" width="17.6" height="17.6" style="left:581.00px;top:921.10px;color:#475569;stroke-width:2;"><path d="M3 3v16a2 2 0 0 0 2 2h16"/><path d="M18 17V9"/><path d="M13 17V5"/><path d="M8 17v-3"/></svg>
<div class="t" style="left:602.73px;top:923px;font-size:16px;font-weight:400;color:#4b5669;letter-spacing:0.098px;background:rgba(255,255,255,.7);border-radius:4px;box-shadow:0 0 2px 1px rgba(255,255,255,.7);text-shadow:0 0 2px #fff,0 0 3px #fff;">25 scans</div>
<div class="abs" style="left:1682.2px;top:847.65px;width:86.40px;height:24.05px;background:#fef3c7;border-radius:12px"></div>
<div class="abs" style="left:1693.6px;top:855.8px;width:7.80px;height:7.80px;background:#dc8a2e;border-radius:50%"></div>
<div class="t" style="left:1707.41px;top:854px;font-size:13.8px;font-weight:700;color:#b45309;letter-spacing:-0.053px;">Paused</div>
<div class="card row" style="left:436px;top:984.55px;width:1350.6px;height:137.5px;border-radius:14px;border-color:#e2e8f0"><div class="abs" style="left:126px;top:43.5px;right:0;bottom:0;background:#f5f6fe"></div><div class="abs" style="left:332.5px;top:31.7px;right:104.5px;height:13px;background:#f5f6fe"></div><div class="abs" style="left:0;top:0;width:126.1px;bottom:0;background:#f8fafc;border-right:1px solid #e5e9f0"></div><div class="abs" style="left:19.7px;top:19.1px;width:86.5px;height:86.5px;border-radius:11px;background:#fff;box-shadow:0 1px 3px rgba(15,23,42,.07)"><svg viewBox="0 0 29 29" width="77.3" height="77.3" style="left:4.5px;top:4.8px"><path d="M0,0h7v1.04h-7zM8,0h1v1.04h-1zM11,0h7v1.04h-7zM20,0h1v1.04h-1zM22,0h7v1.04h-7zM0,1h1v1.04h-1zM6,1h1v1.04h-1zM8,1h1v1.04h-1zM10,1h2v1.04h-2zM14,1h3v1.04h-3zM18,1h1v1.04h-1zM22,1h1v1.04h-1zM28,1h1v1.04h-1zM0,2h1v1.04h-1zM2,2h3v1.04h-3zM6,2h1v1.04h-1zM8,2h3v1.04h-3zM12,2h4v1.04h-4zM18,2h2v1.04h-2zM22,2h1v1.04h-1zM24,2h3v1.04h-3zM28,2h1v1.04h-1zM0,3h1v1.04h-1zM2,3h3v1.04h-3zM6,3h1v1.04h-1zM10,3h1v1.04h-1zM15,3h2v1.04h-2zM19,3h1v1.04h-1zM22,3h1v1.04h-1zM24,3h3v1.04h-3zM28,3h1v1.04h-1zM0,4h1v1.04h-1zM2,4h3v1.04h-3zM6,4h1v1.04h-1zM9,4h4v1.04h-4zM17,4h4v1.04h-4zM22,4h1v1.04h-1zM24,4h3v1.04h-3zM28,4h1v1.04h-1zM0,5h1v1.04h-1zM6,5h1v1.04h-1zM10,5h3v1.04h-3zM14,5h2v1.04h-2zM19,5h1v1.04h-1zM22,5h1v1.04h-1zM28,5h1v1.04h-1zM0,6h7v1.04h-7zM8,6h1v1.04h-1zM10,6h1v1.04h-1zM12,6h1v1.04h-1zM14,6h1v1.04h-1zM16,6h1v1.04h-1zM18,6h1v1.04h-1zM20,6h1v1.04h-1zM22,6h7v1.04h-7zM8,7h3v1.04h-3zM13,7h1v1.04h-1zM16,7h1v1.04h-1zM18,7h3v1.04h-3zM3,8h5v1.04h-5zM10,8h2v1.04h-2zM14,8h2v1.04h-2zM18,8h1v1.04h-1zM21,8h1v1.04h-1zM24,8h1v1.04h-1zM27,8h2v1.04h-2zM0,9h2v1.04h-2zM3,9h2v1.04h-2zM8,9h3v1.04h-3zM12,9h1v1.04h-1zM17,9h1v1.04h-1zM21,9h2v1.04h-2zM25,9h2v1.04h-2zM28,9h1v1.04h-1zM0,10h7v1.04h-7zM8,10h2v1.04h-2zM14,10h1v1.04h-1zM16,10h1v1.04h-1zM19,10h1v1.04h-1zM21,10h3v1.04h-3zM27,10h2v1.04h-2zM3,11h3v1.04h-3zM7,11h2v1.04h-2zM11,11h3v1.04h-3zM15,11h1v1.04h-1zM19,11h3v1.04h-3zM23,11h2v1.04h-2zM26,11h1v1.04h-1zM28,11h1v1.04h-1zM0,12h5v1.04h-5zM6,12h3v1.04h-3zM10,12h2v1.04h-2zM14,12h1v1.04h-1zM17,12h3v1.04h-3zM21,12h1v1.04h-1zM24,12h1v1.04h-1zM27,12h1v1.04h-1zM0,13h1v1.04h-1zM2,13h4v1.04h-4zM9,13h1v1.04h-1zM11,13h2v1.04h-2zM16,13h1v1.04h-1zM18,13h2v1.04h-2zM22,13h3v1.04h-3zM27,13h1v1.04h-1zM3,14h1v1.04h-1zM5,14h2v1.04h-2zM13,14h1v1.04h-1zM16,14h4v1.04h-4zM22,14h2v1.04h-2zM25,14h3v1.04h-3zM0,15h4v1.04h-4zM5,15h1v1.04h-1zM7,15h4v1.04h-4zM14,15h2v1.04h-2zM20,15h1v1.04h-1zM22,15h1v1.04h-1zM25,15h1v1.04h-1zM28,15h1v1.04h-1zM0,16h1v1.04h-1zM3,16h5v1.04h-5zM11,16h1v1.04h-1zM15,16h1v1.04h-1zM18,16h1v1.04h-1zM20,16h1v1.04h-1zM23,16h6v1.04h-6zM1,17h3v1.04h-3zM8,17h1v1.04h-1zM10,17h3v1.04h-3zM14,17h1v1.04h-1zM17,17h2v1.04h-2zM20,17h2v1.04h-2zM23,17h1v1.04h-1zM26,17h3v1.04h-3zM0,18h7v1.04h-7zM8,18h1v1.04h-1zM10,18h1v1.04h-1zM13,18h1v1.04h-1zM15,18h1v1.04h-1zM17,18h5v1.04h-5zM23,18h1v1.04h-1zM25,18h1v1.04h-1zM28,18h1v1.04h-1zM1,19h3v1.04h-3zM5,19h1v1.04h-1zM7,19h1v1.04h-1zM9,19h2v1.04h-2zM12,19h6v1.04h-6zM19,19h2v1.04h-2zM22,19h1v1.04h-1zM24,19h3v1.04h-3zM1,20h2v1.04h-2zM6,20h4v1.04h-4zM12,20h1v1.04h-1zM14,20h1v1.04h-1zM16,20h1v1.04h-1zM18,20h1v1.04h-1zM20,20h9v1.04h-9zM8,21h1v1.04h-1zM12,21h1v1.04h-1zM16,21h1v1.04h-1zM20,21h1v1.04h-1zM24,21h1v1.04h-1zM26,21h1v1.04h-1zM0,22h7v1.04h-7zM10,22h2v1.04h-2zM14,22h3v1.04h-3zM18,22h1v1.04h-1zM20,22h1v1.04h-1zM22,22h1v1.04h-1zM24,22h2v1.04h-2zM27,22h2v1.04h-2zM0,23h1v1.04h-1zM6,23h1v1.04h-1zM8,23h1v1.04h-1zM11,23h2v1.04h-2zM14,23h1v1.04h-1zM18,23h3v1.04h-3zM24,23h1v1.04h-1zM26,23h3v1.04h-3zM0,24h1v1.04h-1zM2,24h3v1.04h-3zM6,24h1v1.04h-1zM8,24h3v1.04h-3zM12,24h2v1.04h-2zM17,24h2v1.04h-2zM20,24h5v1.04h-5zM28,24h1v1.04h-1zM0,25h1v1.04h-1zM2,25h3v1.04h-3zM6,25h1v1.04h-1zM11,25h1v1.04h-1zM13,25h4v1.04h-4zM19,25h1v1.04h-1zM21,25h1v1.04h-1zM24,25h1v1.04h-1zM27,25h1v1.04h-1zM0,26h1v1.04h-1zM2,26h3v1.04h-3zM6,26h1v1.04h-1zM8,26h1v1.04h-1zM10,26h2v1.04h-2zM13,26h3v1.04h-3zM19,26h1v1.04h-1zM21,26h6v1.04h-6zM0,27h1v1.04h-1zM6,27h1v1.04h-1zM13,27h1v1.04h-1zM19,27h3v1.04h-3zM25,27h1v1.04h-1zM28,27h1v1.04h-1zM0,28h7v1.04h-7zM8,28h1v1.04h-1zM10,28h1v1.04h-1zM13,28h1v1.04h-1zM15,28h1v1.04h-1zM17,28h1v1.04h-1zM19,28h3v1.04h-3zM24,28h2v1.04h-2zM28,28h1v1.04h-1z" fill="#1496b1"/></svg></div></div>
<div class="t" style="left:580.81px;top:1008px;font-size:18.8px;font-weight:400;color:#0f172a;letter-spacing:-0.103px;-webkit-text-stroke:0.35px #0f172a;">Tech Conference 2024</div>
<div class="abs" style="left:1682.2px;top:1003.0999999999999px;width:86.40px;height:24.05px;background:#fef3c7;border-radius:12px"></div>
<div class="abs" style="left:1693.6px;top:1011.25px;width:7.80px;height:7.80px;background:#dc8a2e;border-radius:50%"></div>
<div class="t" style="left:1707.41px;top:1009px;font-size:13.8px;font-weight:700;color:#b45309;letter-spacing:-0.053px;">Paused</div>
<div class="abs" style="left:1904px;top:0px;width:16.00px;height:1021.00px;background:#f4f4f5;border-left:1px solid #e9e9ec"></div>
<div class="abs" style="left:1907.6px;top:3.5px;width:9.00px;height:427.50px;background:#c1c1c4;border-radius:5px"></div>
</div>
</div>
<div id="sb">
<div class="lay">
<div class="abs" style="left:27px;top:22px;width:44.00px;height:44.00px;background:#4f46e5;border-radius:12px;box-shadow:0 6px 16px rgba(79,70,229,.13)"></div>
<svg class="ic" viewBox="0 0 24 24" width="26.67" height="26.67" style="left:35.66px;top:30.66px;color:#fff;stroke-width:2;"><rect width="5" height="5" x="3" y="3" rx="1"/><rect width="5" height="5" x="16" y="3" rx="1"/><rect width="5" height="5" x="3" y="16" rx="1"/><path d="M21 16h-3a2 2 0 0 0-2 2v3"/><path d="M21 21v.01"/><path d="M12 7v3a2 2 0 0 1-2 2H7"/><path d="M3 12h.01"/><path d="M12 3h.01"/><path d="M12 16v.01"/><path d="M16 12h1"/><path d="M21 12v.01"/><path d="M12 21v-1"/></svg>
<div class="t" style="left:83.93px;top:34px;font-size:21.6px;font-weight:700;color:#fff;letter-spacing:-0.166px;transform:scaleX(0.9774);transform-origin:0 0;">QR Code Maker</div>
<div class="sep" style="top:87.5px"></div>
<div class="abs" style="left:18px;top:107px;width:283.00px;height:53.00px;background:#0a0f24;border:1px solid #1a2138;border-radius:11px"></div>
<div class="abs" style="left:37px;top:118px;width:31.00px;height:31.00px;background:#1a1f36;border-radius:8px"></div>
<svg class="ic" viewBox="0 0 24 24" width="18.67" height="18.67" style="left:43.06px;top:124.06px;color:#9589f7;stroke-width:2;"><path d="M6 22V4a2 2 0 0 1 2-2h8a2 2 0 0 1 2 2v18Z"/><path d="M6 12H4a2 2 0 0 0-2 2v6a2 2 0 0 0 2 2h2"/><path d="M18 9h2a2 2 0 0 1 2 2v9a2 2 0 0 1-2 2h-2"/><path d="M10 6h4"/><path d="M10 10h4"/><path d="M10 14h4"/><path d="M10 18h4"/></svg>
<div class="t" style="left:80.04px;top:125px;font-size:16.2px;font-weight:400;color:#e2e8f0;letter-spacing:-0.057px;-webkit-text-stroke:0.25px #e2e8f0;">Denso Wave</div>
<svg class="ic" viewBox="0 0 24 24" width="16" height="16" style="left:265.20px;top:125.70px;color:#94a3b8;stroke-width:2;"><path d="m6 9 6 6 6-6"/></svg>
<div class="abs" style="left:18px;top:177.5px;width:283.00px;height:49.50px;background:#4f46e5;border-radius:11px;box-shadow:0 6px 16px rgba(79,70,229,.14)"></div>
<svg class="ic" viewBox="0 0 24 24" width="18.67" height="18.67" style="left:82.47px;top:193.16px;color:#fff;stroke-width:2;"><path d="M5 12h14"/><path d="M12 5v14"/></svg>
<div class="t" style="left:118.01px;top:194px;font-size:16.2px;font-weight:400;color:#fff;letter-spacing:-0.157px;-webkit-text-stroke:0.3px #fff;">Create QR Code</div>
<div class="abs" style="left:18px;top:253.3px;width:283.00px;height:50.70px;background:#0c0f2e;border:1px solid #1c1f4e;border-radius:11px"></div>
<svg class="ic" viewBox="0 0 24 24" width="21.33" height="21.33" style="left:37.04px;top:268.33px;color:#8a85f8;stroke-width:2;"><rect width="5" height="5" x="3" y="3" rx="1"/><rect width="5" height="5" x="16" y="3" rx="1"/><rect width="5" height="5" x="3" y="16" rx="1"/><path d="M21 16h-3a2 2 0 0 0-2 2v3"/><path d="M21 21v.01"/><path d="M12 7v3a2 2 0 0 1-2 2H7"/><path d="M3 12h.01"/><path d="M12 3h.01"/><path d="M12 16v.01"/><path d="M16 12h1"/><path d="M21 12v.01"/><path d="M12 21v-1"/></svg>
<div class="t" style="left:72.18px;top:270px;font-size:16.2px;font-weight:400;color:#8a85f8;letter-spacing:-0.125px;transform:scaleX(0.9787);transform-origin:0 0;-webkit-text-stroke:0.3px #8a85f8;">QR Codes</div>
<svg class="ic" viewBox="0 0 24 24" width="21.33" height="21.33" style="left:36.04px;top:322.23px;color:#7c889c;stroke-width:2;"><path d="m6 14 1.5-2.9A2 2 0 0 1 9.24 10H20a2 2 0 0 1 1.94 2.5l-1.54 6a2 2 0 0 1-1.95 1.5H4a2 2 0 0 1-2-2V5a2 2 0 0 1 2-2h3.9a2 2 0 0 1 1.69.9l.81 1.2a2 2 0 0 0 1.67.9H18a2 2 0 0 1 2 2v2"/></svg>
<div class="t" style="left:70.44px;top:325px;font-size:16.2px;font-weight:400;color:#9aa5b8;letter-spacing:0.182px;-webkit-text-stroke:0.25px #9aa5b8;">Folders</div>
<svg class="ic" viewBox="0 0 24 24" width="21.33" height="21.33" style="left:36.04px;top:375.83px;color:#7c889c;stroke-width:2;"><rect width="18" height="18" x="3" y="3" rx="2" ry="2"/><circle cx="9" cy="9" r="2"/><path d="m21 15-3.086-3.086a2 2 0 0 0-2.828 0L6 21"/></svg>
<div class="t" style="left:71.46px;top:378px;font-size:16.2px;font-weight:400;color:#9aa5b8;letter-spacing:0.093px;-webkit-text-stroke:0.25px #9aa5b8;">Assets</div>
<svg class="ic" viewBox="0 0 24 24" width="21.33" height="21.33" style="left:36.04px;top:429.33px;color:#7c889c;stroke-width:2;"><path d="M3 3v16a2 2 0 0 0 2 2h16"/><path d="M18 17V9"/><path d="M13 17V5"/><path d="M8 17v-3"/></svg>
<div class="t" style="left:71.46px;top:431px;font-size:16.2px;font-weight:400;color:#9aa5b8;letter-spacing:0.088px;transform:scaleX(1.0209);transform-origin:0 0;-webkit-text-stroke:0.25px #9aa5b8;">Analytics</div>
<div class="sep" style="top:473.3px"></div>
<svg class="ic" viewBox="0 0 24 24" width="16" height="16" style="left:26.50px;top:493.40px;color:#64748b;stroke-width:2;"><path d="m9 18 6-6-6-6"/></svg>
<div class="t" style="left:50.88px;top:495px;font-size:13.4px;font-weight:400;color:#6b778e;letter-spacing:0.227px;transform:scaleX(1.0462);transform-origin:0 0;-webkit-text-stroke:0.45px #6b778e;">MY FOLDERS</div>
<div class="t" style="left:283.08px;top:494px;font-size:14px;font-weight:400;color:#4a566c;letter-spacing:0.000px;transform:scaleX(1.1327);transform-origin:0 0;">3</div>
<div class="abs" style="left:18px;top:813.25px;width:283.00px;height:90.75px;background:#080d22;border:1px solid #141a31;border-radius:12px"></div>
<div class="t" style="left:36.24px;top:837px;font-size:14.9px;font-weight:400;color:#39425a;letter-spacing:0.154px;transform:scaleX(1.0302);transform-origin:0 0;">QR Codes</div>
<div class="t" style="left:222.69px;top:837px;font-size:14.9px;font-weight:400;color:#0e1430;letter-spacing:0.276px;transform:scaleX(1.0740);transform-origin:0 0;">12 / 500</div>
<div class="abs" style="left:36.75px;top:863px;width:245.75px;height:9.00px;background:#1e1f54;border-radius:5px;overflow:hidden"><div style="width:6.5px;height:100%;background:#6c68e4"></div></div>
<div class="sep" style="top:922px"></div>
<div class="abs" style="left:26.75px;top:950px;width:44.50px;height:44.50px;background:#4f46e5;border-radius:50%;box-shadow:0 0 0 1.5px #11143a"></div>
<div class="t" style="left:35.66px;top:964px;font-size:16.5px;font-weight:700;color:#fff;letter-spacing:0.307px;transform:scaleX(1.0250);transform-origin:0 0;">MH</div>
<div class="t" style="left:84.04px;top:955px;font-size:16.2px;font-weight:400;color:#fff;letter-spacing:0.149px;-webkit-text-stroke:0.6px #fff;">Masahiro Hara</div>
<div class="t" style="left:84.71px;top:976px;font-size:14.7px;font-weight:400;color:#64748b;letter-spacing:-0.033px;">test@test.com</div>
<svg class="ic" viewBox="0 0 24 24" width="16" height="16" style="left:275.50px;top:964.10px;color:#94a3b8;stroke-width:2;"><path d="m6 9 6 6 6-6"/></svg>
</div>
</div>
</body>
</html>
